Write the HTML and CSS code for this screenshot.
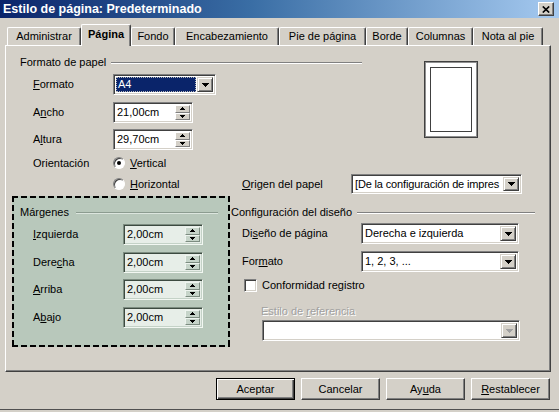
FILE: index.html
```html
<!DOCTYPE html>
<html lang="es">
<head>
<meta charset="utf-8">
<title>Estilo de página</title>
<link rel="stylesheet" href="styles.css">
</head>
<body>
<div class="window">
  <div class="titlebar">
    <span class="title">Estilo de página: Predeterminado</span>
    <span class="close"><svg width="8" height="7" viewBox="0 0 8 7"><path d="M0.8 0.5L7.2 6.5M7.2 0.5L0.8 6.5" stroke="#000" stroke-width="1.7" fill="none"/></svg></span>
  </div>

  <div class="tabs">
    <div class="tab tw-1">Administrar</div>
    <div class="tab tab-active tw-2">Página</div>
    <div class="tab tw-3">Fondo</div>
    <div class="tab tw-4">Encabezamiento</div>
    <div class="tab tw-5">Pie de página</div>
    <div class="tab tw-6">Borde</div>
    <div class="tab tw-7">Columnas</div>
    <div class="tab tw-8">Nota al pie</div>
  </div>

  <div class="panel">
    <div class="paper">
      <div class="paper-upper">
        <div class="paper-left">
          <div class="group-head"><span>Formato de papel</span><i class="etch"></i></div>
          <div class="prow prow-1">
            <span class="lbl lbl-80"><u>F</u>ormato</span>
            <div class="combo combo-a4">
              <span class="combo-text sel">A4</span>
              <span class="drop"><svg width="7" height="4" viewBox="0 0 7 4" shape-rendering="crispEdges"><path d="M0 0h7v1h-1v1h-1v1h-1v1h-1v-1h-1v-1h-1v-1h-1z" fill="#000"/></svg></span>
            </div>
          </div>
          <div class="prow prow-2">
            <span class="lbl lbl-80">A<u>n</u>cho</span>
            <div class="spin">
              <span class="spin-text">21,00cm</span>
              <span class="spin-btns">
                <span class="sb"><svg width="5" height="3" viewBox="0 0 5 3" shape-rendering="crispEdges"><path d="M2 0h1v1h1v1h1v1H0V2h1V1h1z" fill="#000"/></svg></span>
                <span class="sb"><svg width="5" height="3" viewBox="0 0 5 3" shape-rendering="crispEdges"><path d="M0 0h5v1H4v1H3v1H2V2H1V1H0z" fill="#000"/></svg></span>
              </span>
            </div>
          </div>
          <div class="prow prow-3">
            <span class="lbl lbl-80">A<u>l</u>tura</span>
            <div class="spin">
              <span class="spin-text">29,70cm</span>
              <span class="spin-btns">
                <span class="sb"><svg width="5" height="3" viewBox="0 0 5 3" shape-rendering="crispEdges"><path d="M2 0h1v1h1v1h1v1H0V2h1V1h1z" fill="#000"/></svg></span>
                <span class="sb"><svg width="5" height="3" viewBox="0 0 5 3" shape-rendering="crispEdges"><path d="M0 0h5v1H4v1H3v1H2V2H1V1H0z" fill="#000"/></svg></span>
              </span>
            </div>
          </div>
          <div class="prow prow-radio">
            <span class="lbl lbl-80">Orientación</span>
            <span class="radio checked"></span>
            <span><u>V</u>ertical</span>
          </div>
        </div>
        <div class="preview"><div class="preview-page"></div></div>
      </div>
      <div class="hrow">
        <span class="radio-item"><span class="radio"></span><span><u>H</u>orizontal</span></span>
        <span class="lbl lbl-origen"><u>O</u>rigen del papel</span>
        <div class="combo combo-origen">
          <span class="combo-text combo-text-fit">[De la configuración de impres</span>
          <span class="drop"><svg width="7" height="4" viewBox="0 0 7 4" shape-rendering="crispEdges"><path d="M0 0h7v1h-1v1h-1v1h-1v1h-1v-1h-1v-1h-1v-1h-1z" fill="#000"/></svg></span>
        </div>
      </div>
    </div>

    <div class="lower">
      <div class="margins">
        <div class="group-head"><span>Márgenes</span><i class="etch etch-tint"></i></div>
        <div class="mrow mrow-1">
          <span class="lbl lbl-90"><u>I</u>zquierda</span>
          <div class="spin spin-tint">
            <span class="spin-text">2,00cm</span>
            <span class="spin-btns">
              <span class="sb"><svg width="5" height="3" viewBox="0 0 5 3" shape-rendering="crispEdges"><path d="M2 0h1v1h1v1h1v1H0V2h1V1h1z" fill="#000"/></svg></span>
              <span class="sb"><svg width="5" height="3" viewBox="0 0 5 3" shape-rendering="crispEdges"><path d="M0 0h5v1H4v1H3v1H2V2H1V1H0z" fill="#000"/></svg></span>
            </span>
          </div>
        </div>
        <div class="mrow mrow-2">
          <span class="lbl lbl-90">Dere<u>c</u>ha</span>
          <div class="spin spin-tint">
            <span class="spin-text">2,00cm</span>
            <span class="spin-btns">
              <span class="sb"><svg width="5" height="3" viewBox="0 0 5 3" shape-rendering="crispEdges"><path d="M2 0h1v1h1v1h1v1H0V2h1V1h1z" fill="#000"/></svg></span>
              <span class="sb"><svg width="5" height="3" viewBox="0 0 5 3" shape-rendering="crispEdges"><path d="M0 0h5v1H4v1H3v1H2V2H1V1H0z" fill="#000"/></svg></span>
            </span>
          </div>
        </div>
        <div class="mrow mrow-3">
          <span class="lbl lbl-90"><u>A</u>rriba</span>
          <div class="spin spin-tint">
            <span class="spin-text">2,00cm</span>
            <span class="spin-btns">
              <span class="sb"><svg width="5" height="3" viewBox="0 0 5 3" shape-rendering="crispEdges"><path d="M2 0h1v1h1v1h1v1H0V2h1V1h1z" fill="#000"/></svg></span>
              <span class="sb"><svg width="5" height="3" viewBox="0 0 5 3" shape-rendering="crispEdges"><path d="M0 0h5v1H4v1H3v1H2V2H1V1H0z" fill="#000"/></svg></span>
            </span>
          </div>
        </div>
        <div class="mrow mrow-4">
          <span class="lbl lbl-90">A<u>b</u>ajo</span>
          <div class="spin spin-tint">
            <span class="spin-text">2,00cm</span>
            <span class="spin-btns">
              <span class="sb"><svg width="5" height="3" viewBox="0 0 5 3" shape-rendering="crispEdges"><path d="M2 0h1v1h1v1h1v1H0V2h1V1h1z" fill="#000"/></svg></span>
              <span class="sb"><svg width="5" height="3" viewBox="0 0 5 3" shape-rendering="crispEdges"><path d="M0 0h5v1H4v1H3v1H2V2H1V1H0z" fill="#000"/></svg></span>
            </span>
          </div>
        </div>
      </div>

      <div class="config">
        <div class="group-head"><span>Configuración del diseño</span><i class="etch"></i></div>
        <div class="crow crow-1">
          <span class="lbl lbl-119">Di<u>s</u>eño de página</span>
          <div class="combo combo-cfg">
            <span class="combo-text">Derecha e izquierda</span>
            <span class="drop"><svg width="7" height="4" viewBox="0 0 7 4" shape-rendering="crispEdges"><path d="M0 0h7v1h-1v1h-1v1h-1v1h-1v-1h-1v-1h-1v-1h-1z" fill="#000"/></svg></span>
          </div>
        </div>
        <div class="crow crow-2">
          <span class="lbl lbl-119">For<u>m</u>ato</span>
          <div class="combo combo-cfg">
            <span class="combo-text">1, 2, 3, ...</span>
            <span class="drop"><svg width="7" height="4" viewBox="0 0 7 4" shape-rendering="crispEdges"><path d="M0 0h7v1h-1v1h-1v1h-1v1h-1v-1h-1v-1h-1v-1h-1z" fill="#000"/></svg></span>
          </div>
        </div>
        <div class="check-row">
          <span class="checkbox"></span>
          <span>Conformidad re<u>g</u>istro</span>
        </div>
        <div class="ref-label">Estilo de <u>r</u>eferencia</div>
        <div class="combo combo-disabled">
          <span class="combo-text"></span>
          <span class="drop"><svg width="7" height="4" viewBox="0 0 7 4" shape-rendering="crispEdges"><path d="M0 0h7v1h-1v1h-1v1h-1v1h-1v-1h-1v-1h-1v-1h-1z" fill="#a0a0a0"/></svg></span>
        </div>
      </div>
    </div>
  </div>

  <div class="buttons">
    <button class="btn btn-default">Aceptar</button>
    <button class="btn">Cancelar</button>
    <button class="btn">Ay<u>u</u>da</button>
    <button class="btn"><u>R</u>establecer</button>
  </div>
  <div class="frame-bottom"></div>
</div>
</body>
</html>
```

FILE: styles.css
```css
* { box-sizing: border-box; }
html, body { margin: 0; padding: 0; }
body {
  width: 559px;
  height: 412px;
  overflow: hidden;
  background: #d4d0c8;
  font: 11px/13px "Liberation Sans", Arial, sans-serif;
  color: #000;
}
u { text-decoration-thickness: 1px; text-underline-offset: 1px; }

.window {
  width: 559px;
  height: 412px;
  background: #d4d0c8;
  display: flex;
  flex-direction: column;
}

/* title bar */
.titlebar {
  height: 18px;
  flex: none;
  background: linear-gradient(to right, #0a246a 0%, #3a6ea5 45%, #a6caf0 100%);
  display: flex;
  align-items: center;
  justify-content: space-between;
  padding: 0 5px 0 3px;
}
.title { color: #fff; font-weight: bold; font-size: 12.5px; letter-spacing: 0; }
.close {
  width: 16px;
  height: 14px;
  background: #d4d0c8;
  border-top: 1px solid #fff;
  border-left: 1px solid #fff;
  border-right: 1px solid #404040;
  border-bottom: 1px solid #404040;
  box-shadow: inset -1px -1px #808080;
  display: flex;
  align-items: center;
  justify-content: center;
}

/* tabs */
.tabs {
  display: flex;
  align-items: flex-end;
  height: 21px;
  margin-top: 6px;
  padding-left: 7px;
  flex: none;
}
.tab {
  height: 18px;
  display: flex;
  align-items: center;
  justify-content: center;
  border-top: 1px solid #fff;
  border-left: 1px solid #fff;
  border-right: 1px solid #404040;
  box-shadow: inset -1px 0 #808080;
  border-radius: 2px 2px 0 0;
  white-space: nowrap;
}
.tab-active {
  height: 22px;
  margin-bottom: -1px;
  padding-bottom: 2px;
  font-weight: bold;
  position: relative;
  z-index: 1;
  background: #d4d0c8;
}
.tw-1 { width: 74px; }
.tw-2 { width: 50px; }
.tw-3 { width: 44px; }
.tw-4 { width: 104px; }
.tw-5 { width: 87px; }
.tw-6 { width: 42px; }
.tw-7 { width: 65px; }
.tw-8 { width: 70px; }

/* panel */
.panel {
  margin-left: 5px;
  width: 546px;
  height: 327px;
  flex: none;
  border-top: 1px solid #fff;
  border-left: 1px solid #fff;
  border-right: 1px solid #404040;
  border-bottom: 1px solid #404040;
  box-shadow: inset -1px -1px #808080;
}

.group-head {
  display: flex;
  align-items: center;
  height: 13px;
  white-space: nowrap;
}
.etch {
  flex: 1;
  height: 2px;
  border-top: 1px solid #808080;
  border-bottom: 1px solid #fff;
  margin-left: 5px;
}
.etch-tint { border-top-color: #8c9c90; border-bottom-color: #dce6de; margin-left: 7px; }

.lbl { flex: none; white-space: nowrap; }
.lbl-80 { width: 80px; }
.lbl-90 { width: 90px; }
.lbl-119 { width: 119px; }
.lbl-origen { width: 109px; }

/* paper section */
.paper-upper { display: flex; align-items: flex-start; }
.paper-left { width: 356px; padding-left: 14px; }
.paper-left .group-head { margin-top: 10px; }
.prow { display: flex; align-items: center; height: 21px; margin-left: 13px; }
.prow-1 { margin-top: 5px; }
.prow-2 { margin-top: 7px; }
.prow-3 { margin-top: 6px; }
.prow-radio { height: 14px; margin-top: 6px; }
.prow-radio .radio { margin-right: 5px; }

.preview {
  margin-left: 62px;
  margin-top: 15px;
  width: 54px;
  height: 77px;
  background: #fff;
  border: 1px solid #404040;
  box-shadow: inset 0 0 0 1px #909090;
  padding: 5px;
}
.preview-page {
  width: 100%;
  height: 100%;
  border: 1px solid #404040;
  background: #fff;
}

.hrow {
  display: flex;
  align-items: center;
  height: 20px;
  margin-top: 4px;
  margin-left: 107px;
}
.radio-item { width: 129px; display: flex; align-items: center; gap: 5px; flex: none; }

/* controls */
.spin, .combo {
  display: flex;
  height: 21px;
  background: #fff;
  border: 1px solid;
  border-color: #808080 #fff #fff #808080;
  box-shadow: inset 1px 1px #404040, inset -1px -1px #d4d0c8;
  padding: 2px;
  flex: none;
}
.spin { width: 80px; }
.spin-text, .combo-text {
  flex: 1;
  display: flex;
  align-items: center;
  padding-left: 1px;
  white-space: nowrap;
  overflow: hidden;
}
.combo-text-fit { letter-spacing: -0.15px; }
.spin-btns {
  width: 15px;
  display: flex;
  flex-direction: column;
}
.sb {
  flex: 1;
  display: flex;
  align-items: center;
  justify-content: center;
  background: #d4d0c8;
  border-top: 1px solid #fff;
  border-left: 1px solid #fff;
  border-right: 1px solid #808080;
  border-bottom: 1px solid #808080;
}
.spin-tint {
  background: #e7eee8;
  border-color: #7c8c80 #f2f7f2 #f2f7f2 #7c8c80;
  box-shadow: inset 1px 1px #3c4a40, inset -1px -1px #c4d2c7;
}
.spin-tint .sb {
  background: #c6d4c9;
  border-top-color: #eef4ef;
  border-left-color: #eef4ef;
  border-right-color: #7c8c80;
  border-bottom-color: #7c8c80;
}

.combo-a4 { width: 103px; }
.combo-origen { width: 171px; height: 20px; }
.combo-cfg { width: 158px; }
.combo-disabled { width: 258px; margin-left: 31px; margin-top: 2px; }
.combo-text.sel {
  background: #0a246a;
  color: #fff;
  outline: 1px dotted #b8b8b8;
  outline-offset: -1px;
  padding-left: 2px;
  margin-right: 1px;
}
.drop {
  width: 16px;
  flex: none;
  display: flex;
  align-items: center;
  justify-content: center;
  background: #d4d0c8;
  border-top: 1px solid #d4d0c8;
  border-left: 1px solid #d4d0c8;
  border-right: 1px solid #404040;
  border-bottom: 1px solid #404040;
  box-shadow: inset 1px 1px #fff, inset -1px -1px #808080;
}

.radio {
  width: 12px;
  height: 12px;
  flex: none;
  border-radius: 50%;
  background: #fff;
  border: 1px solid;
  border-color: #808080 #fff #fff #808080;
  box-shadow: inset 1px 1px #404040;
  display: flex;
  align-items: center;
  justify-content: center;
}
.radio.checked::after {
  content: "";
  width: 4px;
  height: 4px;
  border-radius: 50%;
  background: #000;
}

/* lower section */
.lower { display: flex; margin-top: 2px; margin-left: 6px; }
.margins {
  width: 218px;
  height: 151px;
  flex: none;
  padding: 10px 12px 0 8px;
  background:
    repeating-linear-gradient(90deg, #000 0 6px, transparent 6px 9px) left top / 100% 2px no-repeat,
    repeating-linear-gradient(90deg, #000 0 6px, transparent 6px 9px) left bottom / 100% 2px no-repeat,
    repeating-linear-gradient(180deg, #000 0 6px, transparent 6px 9px) left top / 2px 100% no-repeat,
    repeating-linear-gradient(180deg, #000 0 6px, transparent 6px 9px) right top / 2px 100% no-repeat,
    #b8c8bb;
}
.mrow { display: flex; align-items: center; height: 21px; margin-left: 13px; }
.mrow-1 { margin-top: 5px; }
.mrow-2 { margin-top: 7px; }
.mrow-3 { margin-top: 6px; }
.mrow-4 { margin-top: 7px; }

.config { width: 304px; margin-left: 1px; padding-top: 10px; }
.crow { display: flex; align-items: center; height: 21px; margin-left: 11px; }
.crow-1 { margin-top: 4px; }
.crow-2 { margin-top: 7px; }
.check-row {
  display: flex;
  align-items: center;
  height: 13px;
  margin-top: 7px;
  margin-left: 13px;
  gap: 5px;
}
.checkbox {
  width: 13px;
  height: 13px;
  flex: none;
  background: #fff;
  border: 1px solid;
  border-color: #808080 #fff #fff #808080;
  box-shadow: inset 1px 1px #404040, inset -1px -1px #d4d0c8;
}
.ref-label {
  margin-top: 13px;
  margin-left: 30px;
  height: 13px;
  color: #a0a0a0;
  text-shadow: 1px 1px #fff;
  white-space: nowrap;
}

/* buttons */
.buttons {
  display: flex;
  justify-content: flex-end;
  gap: 6px;
  margin-top: 6px;
  padding-right: 9px;
  flex: none;
}
.btn {
  width: 79px;
  height: 22px;
  margin: 0;
  padding: 0;
  font: inherit;
  color: #000;
  background: #d4d0c8;
  border-top: 1px solid #fff;
  border-left: 1px solid #fff;
  border-right: 1px solid #404040;
  border-bottom: 1px solid #404040;
  box-shadow: inset -1px -1px #808080;
}
.btn-default {
  border: 1px solid #000;
  box-shadow: inset 1px 1px #fff, inset -1px -1px #404040, inset -2px -2px #808080;
}
.frame-bottom {
  margin-top: auto;
  height: 3px;
  border-top: 1px solid #505050;
  flex: none;
}
```
